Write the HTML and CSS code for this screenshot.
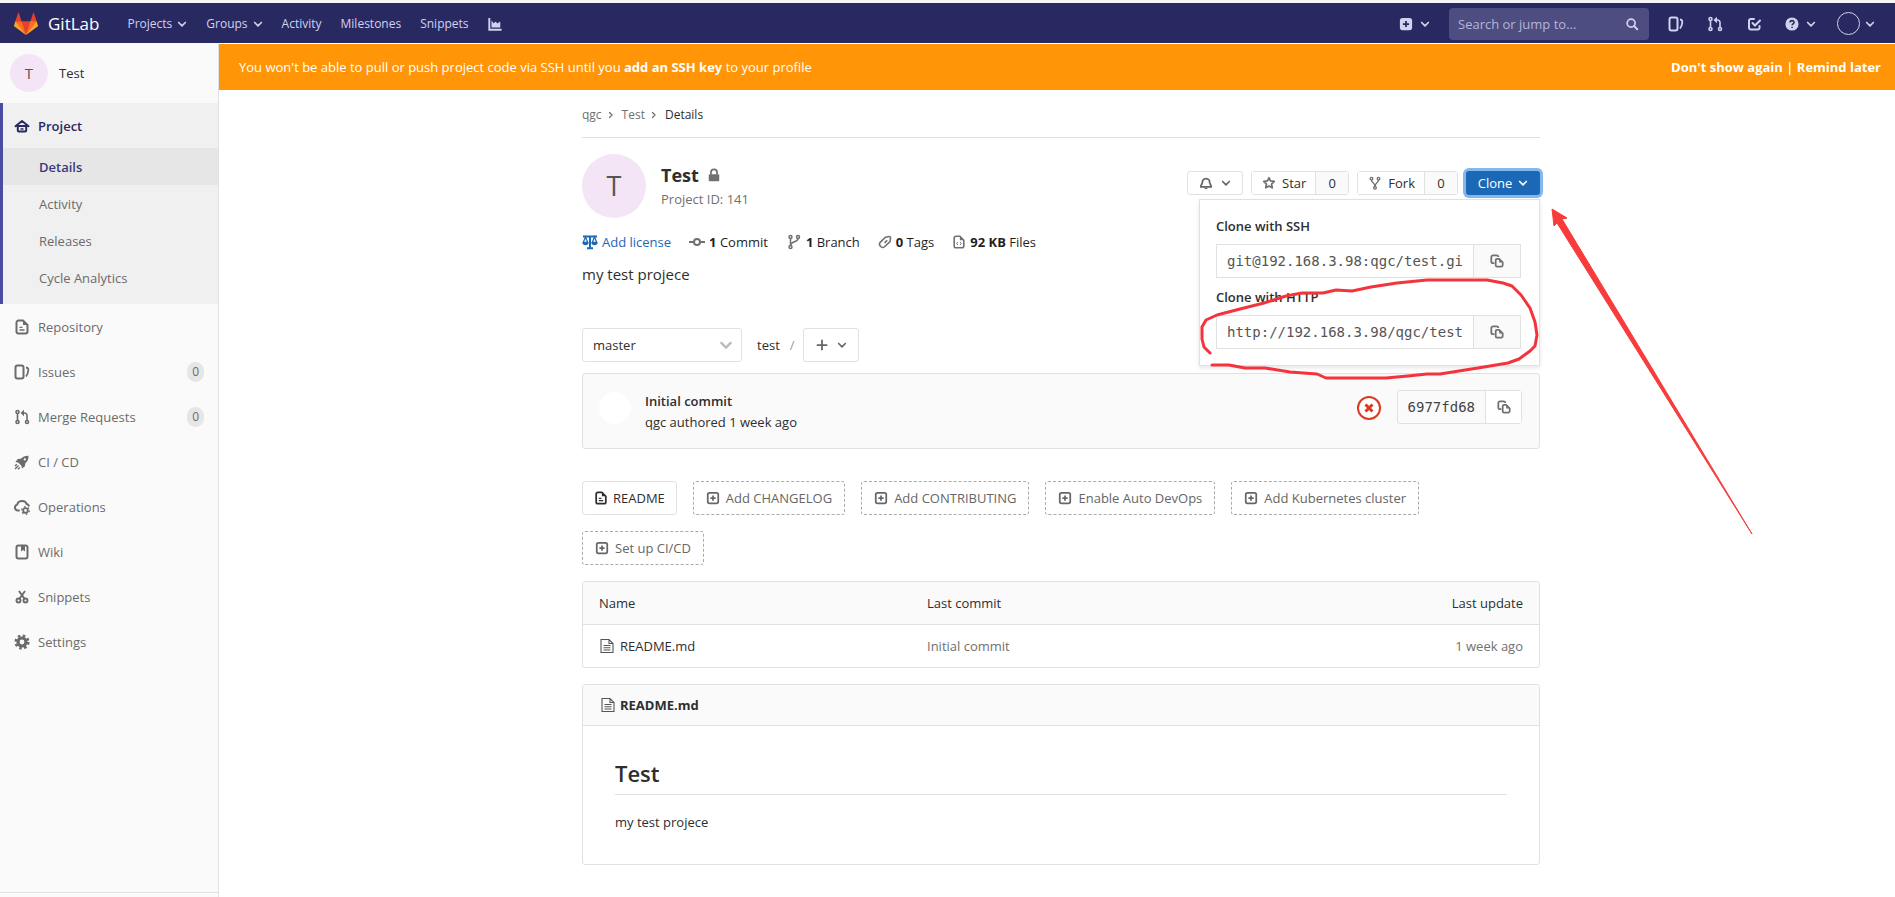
FILE: index.html
```html
<!DOCTYPE html>
<html lang="en">
<head>
<meta charset="utf-8">
<title>qgc / Test · GitLab</title>
<link rel="stylesheet" href="styles.css">
</head>
<body>
<svg class="sprite" aria-hidden="true">
  <symbol id="chevron" viewBox="0 0 12 12"><path d="M2 4.200l4 4 4-4" fill="none" stroke="currentColor" stroke-width="2" stroke-linecap="round" stroke-linejoin="round"/></symbol>
  <symbol id="chev-right" viewBox="0 0 12 12"><path d="M3.500 3.500L6 6 3.500 8.500" fill="none" stroke="currentColor" stroke-width="1.300" stroke-linecap="round" stroke-linejoin="round"/></symbol>
  <symbol id="chart" viewBox="0 0 16 16"><path d="M1.500 1v13.500H15.500" fill="none" stroke="currentColor" stroke-width="2.200"/><path d="M4 12V4l2.500 3 2.500-2 1.500 2.500L14 5v7z" fill="currentColor"/></symbol>
  <symbol id="plus-solid" viewBox="0 0 16 16"><path fill="currentColor" fill-rule="evenodd" d="M4 1h8a3 3 0 0 1 3 3v8a3 3 0 0 1-3 3H4a3 3 0 0 1-3-3V4a3 3 0 0 1 3-3zm3 3.500V7H4.500v2H7v2.500h2V9h2.500V7H9V4.500z"/></symbol>
  <symbol id="plus-box" viewBox="0 0 16 16"><rect x="2" y="2" width="12" height="12" rx="2" fill="none" stroke="currentColor" stroke-width="2"/><path d="M8 5v6M5 8h6" stroke="currentColor" stroke-width="2"/></symbol>
  <symbol id="plus" viewBox="0 0 16 16"><path d="M8 2v12M2 8h12" stroke="currentColor" stroke-width="2"/></symbol>
  <symbol id="search" viewBox="0 0 16 16"><circle cx="7" cy="7" r="4.500" fill="none" stroke="currentColor" stroke-width="2"/><path d="M10.500 10.500L14 14" stroke="currentColor" stroke-width="2.200" stroke-linecap="round"/></symbol>
  <symbol id="issues" viewBox="0 0 16 16"><rect x="1.500" y="1.500" width="8" height="13" rx="2" fill="none" stroke="currentColor" stroke-width="2"/><path d="M12 3.500c2.200.2 2.500 1.200 2.200 3.500-.2 2-.8 3.600-2.200 5.500" fill="none" stroke="currentColor" stroke-width="1.800"/></symbol>
  <symbol id="merge" viewBox="0 0 16 16"><g fill="none" stroke="currentColor" stroke-width="1.600"><circle cx="3.500" cy="3" r="1.500"/><circle cx="3.500" cy="13" r="1.500"/><circle cx="13" cy="13" r="1.500"/><path d="M3.500 4.500v7M13 11.500V6.500a2.500 2.500 0 0 0-2.500-2.500H8.500"/></g><path d="M10 .7v6.600L6.500 4z" fill="currentColor"/></symbol>
  <symbol id="todo" viewBox="0 0 16 16"><path d="M8 3H5a2 2 0 0 0-2 2v6.500a2 2 0 0 0 2 2h6.500a2 2 0 0 0 2-2V10M6.500 7l2.500 2.500L14 4.500" fill="none" stroke="currentColor" stroke-width="2" stroke-linecap="round"/></symbol>
  <symbol id="help" viewBox="0 0 16 16"><circle cx="8" cy="8" r="7.500" fill="currentColor"/><path d="M5.800 6.400c0-3 4.600-2.900 4.500-.2 0 1.600-2.200 1.500-2.200 3.200M8.100 11v1.700" fill="none" stroke="#292961" stroke-width="1.800"/></symbol>
  <symbol id="home" viewBox="0 0 16 16"><path d="M1.500 8.200L8 3l6.500 5.200M3.800 8v4.500a1 1 0 0 0 1 1h6.400a1 1 0 0 0 1-1V8z" fill="none" stroke="currentColor" stroke-width="2" stroke-linejoin="round" stroke-linecap="round"/><path d="M6.500 11h3" stroke="currentColor" stroke-width="1.500"/></symbol>
  <symbol id="doc" viewBox="0 0 16 16"><path d="M9 1.500H4.500a2 2 0 0 0-2 2v9a2 2 0 0 0 2 2h7a2 2 0 0 0 2-2V6z" fill="none" stroke="currentColor" stroke-width="2"/><path d="M9 1l5 5H9zM5.500 7.700h3v1.300h-3zM5.500 10.300h5v1.400h-5z" fill="currentColor"/></symbol>
  <symbol id="doc-code" viewBox="0 0 16 16"><path d="M9 1.500H4.500a2 2 0 0 0-2 2v9a2 2 0 0 0 2 2h7a2 2 0 0 0 2-2V6z" fill="none" stroke="currentColor" stroke-width="1.800"/><path d="M9 1l5 5H9z" fill="currentColor"/><path d="M6.800 8L5.300 9.700l1.500 1.700M9.200 8l1.500 1.700-1.500 1.700" fill="none" stroke="currentColor" stroke-width="1.100"/></symbol>
  <symbol id="rocket" viewBox="0 0 16 16"><path fill="currentColor" fill-rule="evenodd" d="M14.500 1.700c.2 3-.8 5.500-3.200 7.600l-.4 3L8 14.500l-.6-2.800-3.200-3.200L1.400 8l2.400-3 3-.3C8.900 2.400 11.500 1.500 14.500 1.700zM10.800 4.300a1.100 1.100 0 1 0 0 2.200 1.100 1.100 0 0 0 0-2.200z"/><path d="M1 15l3.500-3.500M1 12l1.800-1.800M4 15.200l1.800-1.800" stroke="currentColor" stroke-width="1.400"/></symbol>
  <symbol id="ops" viewBox="0 0 16 16"><path d="M5 11.500H4A3 3 0 0 1 3.200 5.600C4 1 11.500.6 12.600 5c1 .2 1.800.8 2.200 1.700" fill="none" stroke="currentColor" stroke-width="2" stroke-linecap="round"/><circle cx="11.500" cy="11.500" r="2.300" fill="none" stroke="currentColor" stroke-width="1.800"/><circle cx="11.500" cy="11.500" r="3.800" fill="none" stroke="currentColor" stroke-width="1.400" stroke-dasharray="1.600 2.380"/></symbol>
  <symbol id="wiki" viewBox="0 0 16 16"><rect x="2.500" y="1.500" width="11" height="13" rx="2" fill="none" stroke="currentColor" stroke-width="2"/><path d="M7 2h4v5.500L9 6 7 7.500z" fill="currentColor"/></symbol>
  <symbol id="scissors" viewBox="0 0 16 16"><g fill="none" stroke="currentColor" stroke-width="1.900"><circle cx="4.500" cy="11.500" r="2"/><circle cx="11.500" cy="11.500" r="2"/><path d="M5.500 9.800L11 2M10.500 9.800L5 2"/></g></symbol>
  <symbol id="gear" viewBox="0 0 16 16"><circle cx="8" cy="8" r="4" fill="none" stroke="currentColor" stroke-width="3.200"/><circle cx="8" cy="8" r="6.300" fill="none" stroke="currentColor" stroke-width="2.600" stroke-dasharray="2.500 2.448"/></symbol>
  <symbol id="lock" viewBox="0 0 16 16"><path d="M4.500 7.500V5a3.500 3.500 0 0 1 7 0v2.500" fill="none" stroke="currentColor" stroke-width="2"/><rect x="2" y="7" width="12" height="8" rx="1" fill="currentColor"/></symbol>
  <symbol id="scale" viewBox="0 0 16 16"><path d="M1 2.500h14M8 1.500v12M5 14.200h6" fill="none" stroke="currentColor" stroke-width="2"/><path d="M3.500 3L1.200 8.500h4.600zM12.500 3l-2.300 5.500h4.600z" fill="none" stroke="currentColor" stroke-width="1.300"/><path d="M.5 8.500h6a3 2.800 0 0 1-6 0zM9.500 8.500h6a3 2.800 0 0 1-6 0z" fill="currentColor"/></symbol>
  <symbol id="commit" viewBox="0 0 16 16"><circle cx="8" cy="8" r="3" fill="none" stroke="currentColor" stroke-width="2"/><path d="M0 8h5M11 8h5" stroke="currentColor" stroke-width="2"/></symbol>
  <symbol id="branch" viewBox="0 0 16 16"><g fill="none" stroke="currentColor" stroke-width="1.500"><circle cx="4.500" cy="3" r="1.500"/><circle cx="4.500" cy="13" r="1.500"/><circle cx="12" cy="3" r="1.500"/><path d="M4.500 4.500v7M12 4.500c0 4-7 2.500-7.300 6.500"/></g></symbol>
  <symbol id="tag" viewBox="0 0 16 16"><path d="M8.500 2.600l4-.8a1.500 1.500 0 0 1 1.800 1.600l-.5 4.200L7.500 13.400a3 3 0 0 1-4 0l-1-1a3 3 0 0 1 0-4z" fill="none" stroke="currentColor" stroke-width="1.800"/><path d="M7.500 9l3-3" stroke="currentColor" stroke-width="1.800"/></symbol>
  <symbol id="bell" viewBox="0 0 16 16"><path d="M8 3C5 3 3.800 5.500 3.800 7.300 3.800 9.500 2 10 2 12.500h12c0-2.500-1.800-3-1.800-5.200C12.200 5.500 11 3 8 3z" fill="none" stroke="currentColor" stroke-width="2" stroke-linejoin="round"/><path d="M6 13.500h4a2 1.500 0 0 1-4 0z" fill="currentColor"/></symbol>
  <symbol id="star" viewBox="0 0 16 16"><path d="M8 2l1.700 3.700 4.300.5-3.100 3 .8 4.300L8 11.400l-3.700 2.100.8-4.300-3.100-3 4.300-.5z" fill="none" stroke="currentColor" stroke-width="2" stroke-linejoin="round"/></symbol>
  <symbol id="fork" viewBox="0 0 16 16"><g fill="none" stroke="currentColor" stroke-width="1.500"><circle cx="4" cy="3" r="1.500"/><circle cx="12" cy="3" r="1.500"/><circle cx="8" cy="13.500" r="1.500"/><path d="M4 4.500C4 8 8 7.500 8 12M12 4.500C12 8 8 7.500 8 12"/></g></symbol>
  <symbol id="copy" viewBox="0 0 16 16"><path d="M5 10.500H3.500a2 2 0 0 1-2-2v-5a2 2 0 0 1 2-2h4a2 2 0 0 1 2 2" fill="none" stroke="currentColor" stroke-width="2"/><path d="M10.500 5.700H8a1.500 1.500 0 0 0-1.500 1.500v5.600A1.500 1.500 0 0 0 8 14.300h5a1.500 1.500 0 0 0 1.500-1.500V9.500z" fill="none" stroke="currentColor" stroke-width="2"/><path d="M10.500 5l4.500 4.700h-4.500z" fill="currentColor"/></symbol>
  <symbol id="file" viewBox="0 0 16 16"><path d="M2 1.500h8L14 5.500v9H2zM10 1.500v4h4" fill="none" stroke="currentColor" stroke-width="1.100"/><path d="M4.500 7.500h7M4.500 9.700h7M4.500 12h7" stroke="currentColor" stroke-width="1.100"/></symbol>
  <symbol id="tanuki" viewBox="0 0 36 36"><path fill="#e24329" d="M2 14l9.380 9v-9l-4-12.280c-.205-.632-1.176-.632-1.380 0zM34 14l-9.380 9v-9l4-12.280c.205-.632 1.176-.632 1.380 0zM18 34.380L3 14h30z"/><path fill="#fc6d26" d="M18 34.380L11.380 14H2l6 11.380zM18 34.380L24.620 14H34l-6 11.380z"/><path fill="#fca326" d="M2 14L.1 20.160c-.18.565 0 1.200.5 1.560l17.420 12.660zM34 14l1.900 6.160c.18.565 0 1.200-.5 1.560L18 34.380z"/></symbol>
</svg>

<header class="navbar">
  <a class="brand" href="#"><svg class="logo"><use href="#tanuki"/></svg><span>GitLab</span></a>
  <nav class="nav-links" aria-label="Main">
    <button type="button">Projects <svg class="i10"><use href="#chevron"/></svg></button>
    <button type="button">Groups <svg class="i10"><use href="#chevron"/></svg></button>
    <a href="#">Activity</a>
    <a href="#">Milestones</a>
    <a href="#">Snippets</a>
    <a href="#" aria-label="Instance statistics"><svg class="i14"><use href="#chart"/></svg></a>
  </nav>
  <div class="nav-right">
    <button type="button" aria-label="New"><svg class="i14"><use href="#plus-solid"/></svg><svg class="i10"><use href="#chevron"/></svg></button>
    <form class="search"><input type="text" placeholder="Search or jump to..." aria-label="Search or jump to"><svg class="i14"><use href="#search"/></svg></form>
    <a href="#" aria-label="Issues"><svg class="i16"><use href="#issues"/></svg></a>
    <a href="#" aria-label="Merge requests"><svg class="i16"><use href="#merge"/></svg></a>
    <a href="#" aria-label="To-Do"><svg class="i16"><use href="#todo"/></svg></a>
    <button type="button" class="help" aria-label="Help"><svg class="i14"><use href="#help"/></svg><svg class="i10"><use href="#chevron"/></svg></button>
    <button type="button" class="user" aria-label="User menu"><span class="user-avatar"></span><svg class="i10"><use href="#chevron"/></svg></button>
  </div>
</header>

<div class="page">
  <aside class="sidebar">
    <a class="context" href="#"><span class="avatar avatar-sm">T</span><span>Test</span></a>
    <ul class="menu">
      <li class="active">
        <a href="#"><svg class="i16"><use href="#home"/></svg>Project</a>
        <ul class="submenu">
          <li class="current"><a href="#">Details</a></li>
          <li><a href="#">Activity</a></li>
          <li><a href="#">Releases</a></li>
          <li><a href="#">Cycle Analytics</a></li>
        </ul>
      </li>
      <li><a href="#"><svg class="i16"><use href="#doc"/></svg>Repository</a></li>
      <li><a href="#"><svg class="i16"><use href="#issues"/></svg>Issues<span class="badge">0</span></a></li>
      <li><a href="#"><svg class="i16"><use href="#merge"/></svg>Merge Requests<span class="badge">0</span></a></li>
      <li><a href="#"><svg class="i16"><use href="#rocket"/></svg>CI / CD</a></li>
      <li><a href="#"><svg class="i16"><use href="#ops"/></svg>Operations</a></li>
      <li><a href="#"><svg class="i16"><use href="#wiki"/></svg>Wiki</a></li>
      <li><a href="#"><svg class="i16"><use href="#scissors"/></svg>Snippets</a></li>
      <li><a href="#"><svg class="i16"><use href="#gear"/></svg>Settings</a></li>
    </ul>
    <div class="sidebar-foot"></div>
  </aside>

  <div class="content">
    <div class="banner">
      <p>You won't be able to pull or push project code via SSH until you <a href="#">add an SSH key</a> to your profile</p>
      <p><a href="#">Don't show again</a> | <a href="#">Remind later</a></p>
    </div>

    <main class="container">
      <nav class="breadcrumb" aria-label="Breadcrumb">
        <a href="#">qgc</a><svg class="i12"><use href="#chev-right"/></svg>
        <a href="#">Test</a><svg class="i12"><use href="#chev-right"/></svg>
        <a class="here" href="#">Details</a>
      </nav>

      <section class="project-head">
        <span class="avatar avatar-lg">T</span>
        <div class="project-title">
          <h1>Test <svg class="i14"><use href="#lock"/></svg></h1>
          <p>Project ID: 141</p>
        </div>
        <div class="actions">
          <button type="button" class="btn small" aria-label="Notifications"><svg class="i14"><use href="#bell"/></svg><svg class="i10"><use href="#chevron"/></svg></button>
          <div class="count-group"><button type="button"><svg class="i14"><use href="#star"/></svg>Star</button><a href="#">0</a></div>
          <div class="count-group"><button type="button"><svg class="i14"><use href="#fork"/></svg>Fork</button><a href="#">0</a></div>
          <div class="clone">
            <button type="button" class="clone-btn">Clone <svg class="i10"><use href="#chevron"/></svg></button>
            <div class="clone-menu">
              <label for="ssh">Clone with SSH</label>
              <div class="copy-row"><input id="ssh" type="text" readonly value="git@192.168.3.98:qgc/test.git"><button type="button" aria-label="Copy SSH URL"><svg class="i14"><use href="#copy"/></svg></button></div>
              <label for="http">Clone with HTTP</label>
              <div class="copy-row"><input id="http" type="text" readonly value="http://192.168.3.98/qgc/test.git"><button type="button" aria-label="Copy HTTP URL"><svg class="i14"><use href="#copy"/></svg></button></div>
            </div>
            <svg class="marks" viewBox="1190 160 580 380" aria-hidden="true">
              <path d="M1210 353L1204 347 1202 339V327L1206 320 1217 315 1240 309 1264 303 1286 296 1302 293H1323L1336 290 1352 291 1371 287 1397 283 1427 280H1487L1503 283 1512 286 1521 295 1530 308 1535 322 1537 335 1535 346 1530 351 1519 359 1508 363 1484 367 1459 371 1440 374H1427L1408 376 1386 378H1326L1317 374 1290 372 1265 368H1245L1229 365H1212" fill="none" stroke="#f4343c" stroke-width="3" stroke-linejoin="round" stroke-linecap="round"/>
              <path d="M1552 209L1567 218 1562 219 1752 534 1557 223 1554 226z" fill="#f83c3c" stroke="#f83c3c" stroke-width="1"/>
            </svg>
          </div>
        </div>
      </section>

      <ul class="stats">
        <li><a class="license" href="#"><svg class="i16"><use href="#scale"/></svg>Add license</a></li>
        <li><a href="#"><svg class="i16"><use href="#commit"/></svg><span><b>1</b> Commit</span></a></li>
        <li><a href="#"><svg class="i16"><use href="#branch"/></svg><span><b>1</b> Branch</span></a></li>
        <li><a href="#"><svg class="i14"><use href="#tag"/></svg><span><b>0</b> Tags</span></a></li>
        <li><a href="#"><svg class="i14"><use href="#doc-code"/></svg><span><b>92 KB</b> Files</span></a></li>
      </ul>
      <p class="description">my test projece</p>

      <div class="tree-controls">
        <div class="ref-select"><select aria-label="Branch"><option>master</option></select><svg class="i14"><use href="#chevron"/></svg></div>
        <a href="#">test</a><span class="slash">/</span>
        <button type="button" class="btn" aria-label="Add to tree"><svg class="i14"><use href="#plus"/></svg><svg class="i10"><use href="#chevron"/></svg></button>
      </div>

      <section class="commit">
        <span class="commit-avatar"></span>
        <div class="commit-text"><a href="#"><strong>Initial commit</strong></a><p>qgc authored 1 week ago</p></div>
        <a class="failed" href="#" aria-label="Pipeline failed"><svg viewBox="0 0 24 24"><circle cx="12" cy="12" r="11" fill="#fff" stroke="#db3b21" stroke-width="2"/><path d="M8.500 8.500l7 7M15.500 8.500l-7 7" stroke="#db3b21" stroke-width="3"/></svg></a>
        <div class="sha"><span>6977fd68</span><button type="button" aria-label="Copy commit SHA"><svg class="i14"><use href="#copy"/></svg></button></div>
      </section>

      <div class="quick">
        <a class="btn dark" href="#"><svg class="i14"><use href="#doc"/></svg>README</a>
        <a class="btn dashed" href="#"><svg class="i14"><use href="#plus-box"/></svg>Add CHANGELOG</a>
        <a class="btn dashed" href="#"><svg class="i14"><use href="#plus-box"/></svg>Add CONTRIBUTING</a>
        <a class="btn dashed" href="#"><svg class="i14"><use href="#plus-box"/></svg>Enable Auto DevOps</a>
        <a class="btn dashed" href="#"><svg class="i14"><use href="#plus-box"/></svg>Add Kubernetes cluster</a>
        <a class="btn dashed" href="#"><svg class="i14"><use href="#plus-box"/></svg>Set up CI/CD</a>
      </div>

      <div class="card">
        <table class="files">
          <thead><tr><th class="name">Name</th><th>Last commit</th><th class="when">Last update</th></tr></thead>
          <tbody><tr><td class="name"><a href="#"><svg class="i16"><use href="#file"/></svg>README.md</a></td><td class="muted">Initial commit</td><td class="when muted">1 week ago</td></tr></tbody>
        </table>
      </div>

      <article class="card readme">
        <header><svg class="i16"><use href="#file"/></svg><strong>README.md</strong></header>
        <div class="readme-body"><h2>Test</h2><p>my test projece</p></div>
      </article>
    </main>
  </div>
</div>
</body>
</html>
```
FILE: styles.css
```css
* { box-sizing: border-box; }
body {
  margin: 0;
  display: flex;
  flex-direction: column;
  min-height: 100vh;
  border-top: 3px solid #f3f4f8;
  background: #fff;
  color: #2e2e2e;
  font: 13px/20px "Open Sans", "Noto Sans", sans-serif;
}
a { color: inherit; text-decoration: none; }
button, input, select { font: inherit; color: inherit; }
button { cursor: pointer; }
p, h1, h2, ul { margin: 0; padding: 0; }
ul { list-style: none; }
svg { flex: none; }
.sprite { position: absolute; width: 0; height: 0; }
.i10 { width: 10px; height: 10px; }
.i12 { width: 12px; height: 12px; }
.i14 { width: 14px; height: 14px; }
.i16 { width: 16px; height: 16px; }

/* Top bar */
.navbar {
  display: flex;
  align-items: center;
  height: 40px;
  padding: 1px 20px 0 14px;
  background: #292961;
  color: #d1d1f0;
}
.brand { display: flex; align-items: center; gap: 10px; color: #fff; font-size: 17px; }
.logo { width: 24px; height: 24px; }
.nav-links { display: flex; align-items: center; gap: 19px; margin-left: 28px; font-size: 12px; font-weight: 500; }
.navbar button { display: flex; align-items: center; gap: 5px; padding: 0; border: 0; background: none; }
.nav-links a, .nav-right a { display: flex; }
.nav-right { display: flex; align-items: center; gap: 23px; margin-left: auto; }
.nav-right button { gap: 7px; }
.search { display: flex; align-items: center; width: 200px; height: 32px; margin: 0 -4px; padding: 0 10px 0 9px; border-radius: 4px; background: #4d4d81; }
.search input { flex: 1; min-width: 0; padding: 0; border: 0; outline: 0; background: none; }
.search input::placeholder { color: #b5b5d8; opacity: 1; }
.user-avatar { width: 23px; height: 23px; border: 1px solid #d1d1f0; border-radius: 50%; }
.nav-right .help { margin-right: -2px; }
.nav-right .user { gap: 5px; }

/* Sidebar */
.page { display: flex; flex: 1; }
.sidebar { display: flex; flex-direction: column; width: 219px; border-right: 1px solid #e1e1e1; background: #fafafa; color: #6b6b6b; }
.context { display: flex; align-items: center; gap: 11px; height: 60px; padding: 0 10px; color: #2e2e2e; font-weight: 500; }
.avatar { display: flex; align-items: center; justify-content: center; border-radius: 50%; background: #f3e5f5; color: #555; }
.avatar-sm { width: 38px; height: 38px; font-size: 15px; }
.avatar-lg { width: 64px; height: 64px; font-size: 27px; }
.menu > li > a { display: flex; align-items: center; gap: 8px; height: 45px; padding: 0 14px; }
.menu > .active { border-left: 3px solid #4b4ba3; background: #f0f0f0; }
.menu > .active > a { padding-left: 11px; color: #292961; font-weight: 600; }
.submenu { padding-bottom: 8px; }
.submenu a { display: block; padding: 9px 0 8px 36px; }
.submenu .current { background: #e6e6e6; color: #393982; font-weight: 600; }
.badge { margin-left: auto; padding: 0 5px; border-radius: 10px; background: #e6e6e6; font-size: 12px; }
.sidebar-foot { height: 5px; margin-top: auto; border-top: 1px solid #e1e1e1; }

/* Content */
.content { flex: 1; min-width: 0; }
.banner { display: flex; justify-content: space-between; margin-top: 1px; padding: 13px 14px 13px 20px; background: #ff9507; color: #fff; }
.banner a { font-weight: 700; }
.banner p + p { font-weight: 600; }
.container { max-width: 966px; margin: 0 auto; padding: 0 0 32px 8px; }
.breadcrumb { display: flex; align-items: center; gap: 4px; height: 48px; padding-top: 2px; border-bottom: 1px solid #e1e1e1; color: #707070; font-size: 12px; }
.breadcrumb .here { color: #2e2e2e; }
.project-head { display: flex; align-items: center; margin-top: 16px; }
.project-title { margin-left: 15px; padding-top: 2px; color: #707070; line-height: 24px; }
.project-title h1 { display: flex; align-items: center; gap: 8px; color: #2e2e2e; font-size: 18px; font-weight: 700; line-height: 24px; }
.project-title svg { color: #707070; }
.actions { display: flex; align-items: center; gap: 8px; margin: 0 0 6px auto; }
.btn { display: inline-flex; align-items: center; gap: 8px; height: 34px; padding: 0 11px; border: 1px solid #e1e1e1; border-radius: 3px; background: #fff; color: #666; }
.btn.small { height: 24px; }
.count-group { display: flex; height: 24px; border: 1px solid #e1e1e1; border-radius: 3px; }
.count-group button { display: flex; align-items: center; gap: 6px; padding: 0 9px 0 10px; border: 0; border-right: 1px solid #e1e1e1; background: #fff; }
.count-group svg { color: #707070; }
.count-group a { width: 32px; background: #fafafa; text-align: center; line-height: 22px; }
.clone { position: relative; }
.clone-btn { display: flex; align-items: center; justify-content: center; gap: 6px; width: 74px; height: 24px; padding: 0; border: 0; border-radius: 3px; background: #1b69b6; box-shadow: 0 0 0 3px #83b7ee; color: #fff; }
.clone-menu { position: absolute; top: 28px; right: 0; z-index: 2; width: 341px; padding: 16px 18px 16px 16px; border: 1px solid #e1e1e1; background: #fff; box-shadow: 0 2px 4px rgba(0, 0, 0, .1); }
.clone-menu label { display: block; margin-bottom: 8px; font-weight: 600; }
.copy-row { display: flex; height: 34px; }
.copy-row + label { margin-top: 9px; }
.copy-row input { flex: 1; min-width: 0; padding: 0 10px; border: 1px solid #e1e1e1; color: #555; font: 14px "DejaVu Sans Mono", monospace; }
.copy-row button { display: grid; place-items: center; width: 47px; padding: 0; border: 1px solid #e1e1e1; border-left: 0; background: #fafafa; color: #707070; }
.marks { position: absolute; top: -11px; left: -276px; z-index: 3; width: 580px; height: 380px; pointer-events: none; }

.stats { display: flex; flex-wrap: wrap; gap: 18px; margin-top: 14px; color: #1f1f1f; }
.stats a { display: flex; align-items: center; gap: 4px; }
.stats svg { color: #707070; }
.stats .license, .stats .license svg { color: #1b69b6; }
.description { margin-top: 11px; font-size: 15px; line-height: 22px; }
.tree-controls { display: flex; align-items: center; margin-top: 43px; }
.ref-select { display: flex; align-items: center; width: 160px; height: 34px; margin-right: 15px; padding-right: 8px; border: 1px solid #e1e1e1; border-radius: 3px; }
.ref-select select { flex: 1; height: 32px; margin-right: -14px; padding: 0 10px; border: 0; background: none; appearance: none; }
.ref-select svg { color: #bbb; }
.slash { margin: 0 8px 0 10px; color: #999; }
.commit { display: flex; align-items: flex-start; margin-top: 11px; padding: 16px 17px 15px 16px; border: 1px solid #e1e1e1; border-radius: 3px; background: #fafafa; }
.commit-avatar { width: 32px; height: 32px; margin: 2px 14px 0 0; border-radius: 50%; background: #fff; }
.commit-text { flex: 1; padding-top: 1px; line-height: 21px; }
.commit-text strong { font-weight: 600; }
.failed { display: flex; padding-top: 6px; }
.failed svg { width: 24px; height: 24px; margin-right: 16px; }
.sha { display: flex; height: 34px; border: 1px solid #e1e1e1; border-radius: 3px; color: #444; font: 14px/32px "DejaVu Sans Mono", monospace; }
.sha span { padding: 0 10px; border-right: 1px solid #e1e1e1; }
.sha button { display: grid; place-items: center; width: 35px; padding: 0; border: 0; background: #fff; color: #707070; }
.quick { display: flex; flex-wrap: wrap; gap: 16px; margin-top: 32px; }
.quick .btn { gap: 5px; }
.quick .dashed { gap: 6px; padding: 0 12px; border: 1px dashed #aaa; }
.btn.dark { color: #2e2e2e; }

.card { margin-top: 16px; border: 1px solid #e1e1e1; border-radius: 3px; overflow: hidden; }
.files { width: 100%; border-collapse: collapse; table-layout: fixed; }
.files th, .files td { padding: 11px 16px; text-align: left; font-weight: 400; }
.files th { border-bottom: 1px solid #e1e1e1; background: #fafafa; }
.files .name { width: 329px; }
.files th + th, .files td + td { padding-left: 15px; }
.files .when { text-align: right; }
.files a { display: flex; align-items: center; gap: 5px; }
.files svg, .readme svg { color: #555; }
.files .muted { color: #707070; }
.readme header { display: flex; align-items: center; gap: 4px; padding: 10px 17px; border-bottom: 1px solid #e1e1e1; background: #fafafa; }
.readme-body { padding: 32px; }
.readme-body h2 { padding-bottom: 6px; border-bottom: 1px solid #e1e1e1; font-size: 22px; font-weight: 600; line-height: 30px; }
.readme-body p { margin-top: 17px; }
```
